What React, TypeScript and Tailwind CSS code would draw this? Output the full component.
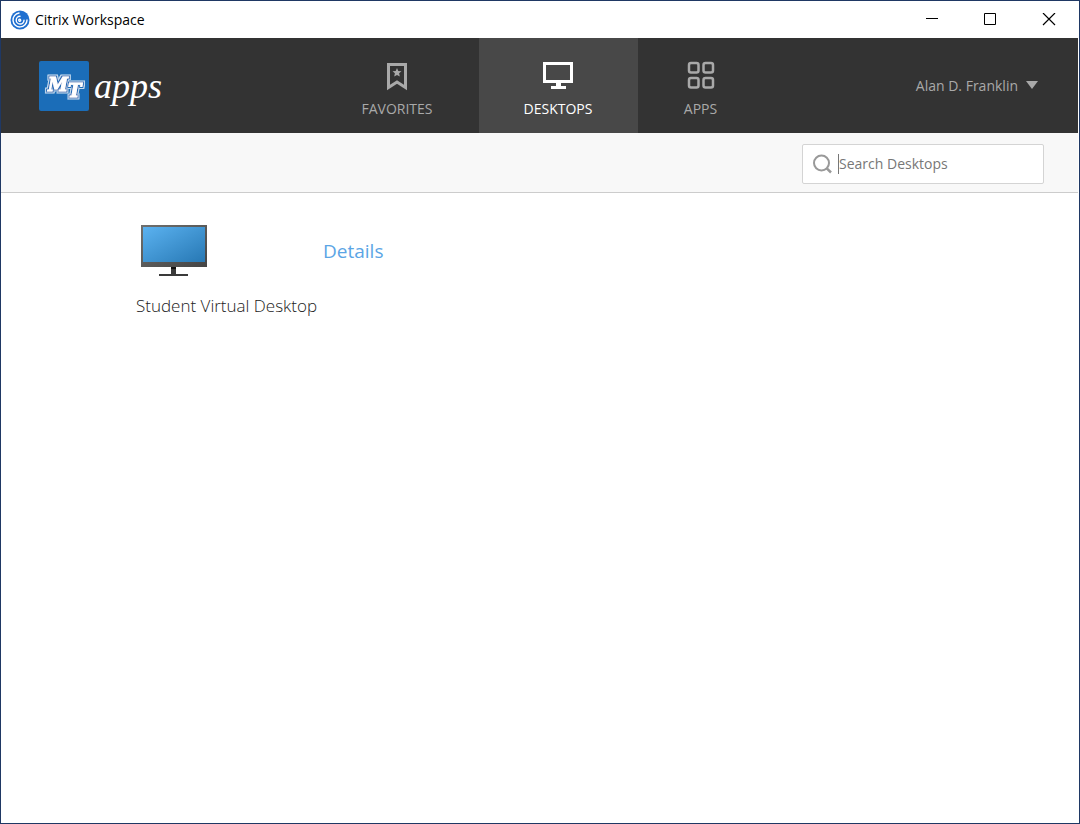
import type { ReactNode } from "react";

function WorkspaceIcon() {
  return (
    <svg width="20" height="20" viewBox="0 0 20 20" fill="none" aria-hidden="true">
      <circle cx="10" cy="10" r="9.5" fill="#1f6fd0" />
      <g stroke="#fff" strokeWidth="1.4" strokeLinecap="round">
        <path d="M9 3a7 7 0 1 0 8 7" />
        <path d="M10 6.2a3.9 3.9 0 1 0 4 4" />
        <path d="M10.5 9.5a1 1 0 1 0 .2 1" />
      </g>
    </svg>
  );
}

function SchoolLogo() {
  return (
    <svg width="50" height="50" viewBox="0 0 50 50" aria-hidden="true">
      <defs>
        <filter id="outline" x="-20%" y="-20%" width="140%" height="140%">
          <feMorphology in="SourceAlpha" operator="dilate" radius="2" result="outer" />
          <feFlood floodColor="#c3daee" />
          <feComposite in2="outer" operator="in" result="white" />
          <feMorphology in="SourceAlpha" operator="dilate" radius="1" result="inner" />
          <feFlood floodColor="#1b6db8" />
          <feComposite in2="inner" operator="in" result="blue" />
          <feMerge>
            <feMergeNode in="white" />
            <feMergeNode in="blue" />
            <feMergeNode in="SourceGraphic" />
          </feMerge>
        </filter>
      </defs>
      <rect width="50" height="50" rx="2" fill="#1b6db8" />
      <text
        x="9"
        y="30"
        fill="#fff"
        stroke="#fff"
        strokeWidth="1"
        fontFamily="'DejaVu Serif', serif"
        fontSize="18"
        fontWeight="bold"
        fontStyle="italic"
        filter="url(#outline)"
      >
        M<tspan dy="6">T</tspan>
      </text>
    </svg>
  );
}

function BookmarkIcon() {
  return (
    <svg width="32" height="30" viewBox="0 0 32 30" aria-hidden="true">
      <path
        d="M7.5 3.5h17v23L16 21l-8.5 5.5z"
        fill="none"
        stroke="currentColor"
        strokeWidth="3"
      />
      <path
        d="M16 7l1.3 2.900 3.2.3-2.400 2.100.7 3.200L16 13.900l-2.800 1.600.7-3.200-2.400-2.100 3.200-.3z"
        fill="currentColor"
      />
    </svg>
  );
}

function MonitorIcon() {
  return (
    <svg width="32" height="30" viewBox="0 0 32 30" fill="currentColor" aria-hidden="true">
      <path d="M1 1h30v21H1zM4 4v15h24V4z" fillRule="evenodd" />
      <path d="M14 22h5v3h5v3H9v-3h5z" />
    </svg>
  );
}

function GridIcon() {
  return (
    <svg
      width="32"
      height="30"
      viewBox="0 0 32 30"
      fill="none"
      stroke="currentColor"
      strokeWidth="2.5"
      aria-hidden="true"
    >
      <rect x="4" y="2" width="9.5" height="9.5" rx="2" />
      <rect x="18.5" y="2" width="9.5" height="9.5" rx="2" />
      <rect x="4" y="17" width="9.5" height="9.5" rx="2" />
      <rect x="18.5" y="17" width="9.5" height="9.5" rx="2" />
    </svg>
  );
}

function DesktopImage() {
  return (
    <svg width="66" height="54" viewBox="0 0 66 54" aria-hidden="true">
      <defs>
        <linearGradient id="screen" x1="0" y1="0" x2="1" y2="1">
          <stop offset="0" stopColor="#5bb2f0" />
          <stop offset="1" stopColor="#2778b4" />
        </linearGradient>
        <linearGradient id="frame" x1="0" y1="0" x2="1" y2="1">
          <stop offset="0" stopColor="#70706e" />
          <stop offset="1" stopColor="#444" />
        </linearGradient>
      </defs>
      <rect y="1" width="66" height="42" fill="url(#frame)" />
      <rect x="2" y="3" width="62" height="35" fill="url(#screen)" />
      <rect x="30" y="43" width="5" height="8" fill="#3a3a3a" />
      <rect x="30" y="43" width="5" height="2" fill="#111" />
      <rect x="18" y="50" width="29" height="2" fill="#3a3a3a" />
    </svg>
  );
}

interface WindowButtonProps {
  label: string;
  children: ReactNode;
}

function WindowButton({ label, children }: WindowButtonProps) {
  return (
    <button
      type="button"
      aria-label={label}
      className="flex w-[58px] items-center justify-center"
    >
      <svg
        width="14"
        height="14"
        viewBox="0 0 14 14"
        fill="none"
        stroke="#000"
        aria-hidden="true"
      >
        {children}
      </svg>
    </button>
  );
}

function TitleBar() {
  return (
    <div className="flex h-[37px] items-center bg-white pl-[9px]">
      <WorkspaceIcon />
      <h1 className="ml-[5px] flex-1 text-sm text-black">Citrix Workspace</h1>
      <div className="flex self-stretch">
        <WindowButton label="Minimize">
          <path d="M0 5.5h12" />
        </WindowButton>
        <WindowButton label="Maximize">
          <path d="M.5.5h11v11H.5z" />
        </WindowButton>
        <WindowButton label="Close">
          <path d="M1 0l12 12M13 0L1 12" strokeWidth="1.2" />
        </WindowButton>
      </div>
    </div>
  );
}

const tabs = [
  { label: "FAVORITES", icon: <BookmarkIcon />, style: "w-[163px] text-[#a9a9a9]" },
  { label: "DESKTOPS", icon: <MonitorIcon />, style: "w-[159px] bg-[#484848] text-white" },
  { label: "APPS", icon: <GridIcon />, style: "w-[126px] text-[#a9a9a9]" },
];

function Header() {
  return (
    <header className="grid h-[95px] grid-cols-[1fr_auto_1fr] items-center bg-[#333]">
      <div className="flex items-center gap-[5px] pl-[38px]">
        <SchoolLogo />
        <span className="font-['Liberation_Serif',serif] text-4xl text-white italic">
          apps
        </span>
      </div>
      <nav className="flex self-stretch">
        {tabs.map((tab) => (
          <button
            key={tab.label}
            type="button"
            className={`flex flex-col items-center justify-center gap-2 pt-2 ${tab.style}`}
          >
            {tab.icon}
            <span className="text-sm">{tab.label}</span>
          </button>
        ))}
      </nav>
      <button
        type="button"
        className="flex items-center gap-2 justify-self-end pr-10 text-sm text-[#a9a9a9]"
      >
        Alan D. Franklin
        <svg width="12" height="10" viewBox="0 0 12 10" fill="currentColor" aria-hidden="true">
          <path d="M0 0h12L6 8z" />
        </svg>
      </button>
    </header>
  );
}

function SearchBar() {
  return (
    <div className="flex h-[60px] items-center justify-end border-b border-[#ccc] bg-[#f8f8f8] pt-0.5 pr-[34px]">
      <label className="flex h-10 w-[242px] items-center rounded-xs border border-[#d4d4d4] bg-white pl-2.5">
        <svg
          width="20"
          height="20"
          viewBox="0 0 20 20"
          fill="none"
          stroke="#999"
          strokeWidth="2"
          aria-hidden="true"
        >
          <circle cx="8.5" cy="9" r="7.5" />
          <path d="M13.8 14.3l4.2 4.2" strokeWidth="2.5" />
        </svg>
        <span className="ml-[5px] h-5 w-px bg-[#777]" />
        <input
          type="text"
          aria-label="Search Desktops"
          placeholder="Search Desktops"
          className="min-w-0 flex-1 bg-transparent text-sm text-[#333] outline-none placeholder:text-[#777]"
        />
      </label>
    </div>
  );
}

export default function App() {
  return (
    <div className="flex min-h-screen flex-col border border-[#1f3864] bg-white pr-px font-['Open_Sans','Noto_Sans',sans-serif]">
      <TitleBar />
      <Header />
      <SearchBar />
      <main className="flex-1 pt-[31px] pl-[135px]">
        <div className="flex items-center">
          <div className="w-[187px] pl-[5px]">
            <DesktopImage />
          </div>
          <a href="#details" className="text-[19px] leading-7 text-[#5ba5e5]">
            Details
          </a>
        </div>
        <h2 className="mt-4 text-[17px] leading-6 font-light text-[#222]">
          Student Virtual Desktop
        </h2>
      </main>
    </div>
  );
}
